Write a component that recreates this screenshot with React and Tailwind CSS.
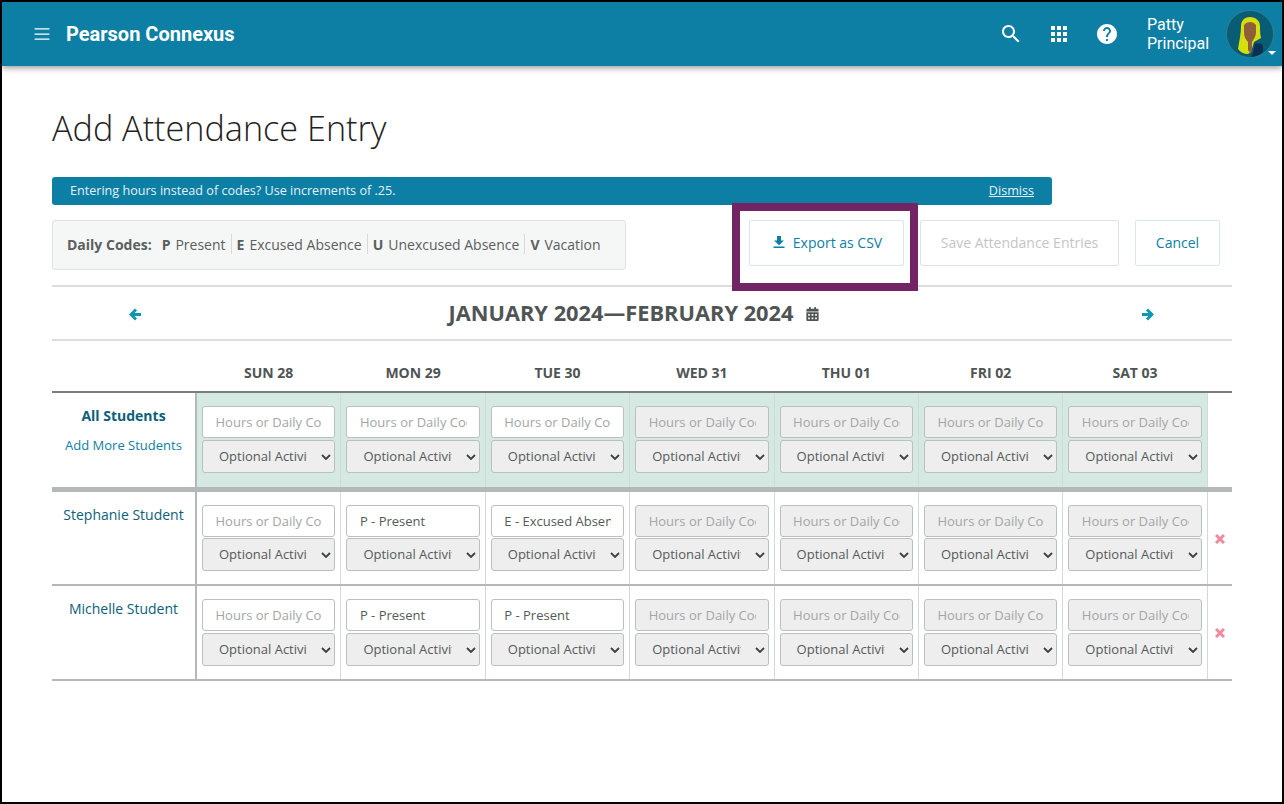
import React from "react";
import { FaCalendarAlt } from "react-icons/fa";

const days = ["SUN 28", "MON 29", "TUE 30", "WED 31", "THU 01", "FRI 02", "SAT 03"];

function Cell({ index, value, dark, wide }) {
  const disabled = index > 2;
  return (
    <div className={`pt-[13px] px-[5px] border-r border-[#d5d8d8] ${dark ? "bg-[#d5e9e3]" : ""}`}>
      <input
        readOnly
        disabled={disabled}
        value={value || ""}
        placeholder="Hours or Daily Code"
        className={`block w-full h-[32px] rounded-[3px] border border-[#bcbfbf] pl-[12.5px] text-[13px] text-[#555a5a] placeholder:text-[#a3a6a6] outline-none ${index === 0 ? "pr-[12.5px]" : "pr-[12px]"} ${disabled ? "bg-[#eeeeee]" : "bg-white"}`}
      />
      <div className={`relative ${wide ? "mt-[2px]" : "mt-px"}`}>
        <select className="block w-full h-[33px] appearance-none rounded-[3px] border border-[#bcbfbf] bg-[#eeeeee] pl-[16px] pr-[27px] text-[13px] text-[#555a5a] outline-none">
          <option>Optional Activities</option>
        </select>
        <svg viewBox="0 0 10 6" className="absolute right-[4px] top-[14px] h-[6px] w-[10px]" fill="none" stroke="#3c4040" strokeWidth="1.8">
          <path d="M1 1l4 4 4-4" />
        </svg>
      </div>
    </div>
  );
}

function Row({ name, values, height, border, wide }) {
  return (
    <div className={`grid grid-cols-[145px_repeat(7,144.4px)_1fr] ${height} ${border}`}>
      <div className="border-r-2 border-[#b5b8b8] pt-[13px] text-center text-[14px] leading-[20px] text-[#0d6079]">{name}</div>
      {days.map((d, i) => (
        <Cell key={d} index={i} value={values[i]} wide={wide} />
      ))}
      <div className="flex items-start justify-center pt-[41.5px]">
        <svg viewBox="0 0 10 10" className="h-[10px] w-[10px]" stroke="#f08aa0" strokeWidth="3">
          <path d="M1 1l8 8M9 1l-8 8" />
        </svg>
      </div>
    </div>
  );
}

export default function App() {
  return (
    <div className="h-[804px] w-[1284px] overflow-hidden border-2 border-black bg-white font-['Open_Sans',sans-serif] text-[#4f5454]">
      <header className="flex h-[64px] items-center bg-[#0d7fa5] pr-[8px] pl-[32px] text-white shadow-[0_2px_6px_rgba(0,0,0,0.4)] font-['Roboto',sans-serif]">
        <svg viewBox="0 0 16 14" className="h-[13px] w-[16px]" stroke="white" strokeWidth="1.4">
          <path d="M0 1h16M0 6.5h16M0 12h16" />
        </svg>
        <span className="ml-[16px] text-[20px] font-bold">Pearson Connexus</span>
        <div className="ml-auto flex items-center">
          <svg viewBox="0 0 24 24" className="h-[24px] w-[24px]" fill="white"><path d="M15.5 14h-.79l-.28-.27C15.41 12.59 16 11.11 16 9.5 16 5.91 13.09 3 9.5 3S3 5.91 3 9.5 5.91 16 9.5 16c1.61 0 3.09-.59 4.23-1.57l.27.28v.79l5 4.99L20.49 19l-4.99-5zm-6 0C7.01 14 5 11.99 5 9.5S7.01 5 9.5 5 14 7.01 14 9.5 11.99 14 9.5 14z" /></svg>
          <svg viewBox="0 0 24 24" className="ml-[24px] h-[24px] w-[24px]" fill="white"><path d="M4 8h4V4H4v4zm6 12h4v-4h-4v4zm-6 0h4v-4H4v4zm0-6h4v-4H4v4zm6 0h4v-4h-4v4zm6-10v4h4V4h-4zm-6 4h4V4h-4v4zm6 6h4v-4h-4v4zm0 6h4v-4h-4v4z" /></svg>
          <svg viewBox="0 0 24 24" className="ml-[24px] h-[24px] w-[24px]" fill="white"><path d="M12 2C6.48 2 2 6.48 2 12s4.48 10 10 10 10-4.48 10-10S17.52 2 12 2zm1 17h-2v-2h2v2zm2.07-7.75l-.9.92C13.45 12.9 13 13.5 13 15h-2v-.5c0-1.1.45-2.1 1.17-2.83l1.24-1.26c.37-.36.59-.86.59-1.41 0-1.1-.9-2-2-2s-2 .9-2 2H8c0-2.21 1.79-4 4-4s4 1.79 4 4c0 .88-.36 1.68-.93 2.25z" /></svg>
          <div className="ml-[28px] w-[70px] text-[16px] leading-[19px]">Patty<br />Principal</div>
          <div className="relative ml-[9px] h-[48px] w-[48px]">
            <svg viewBox="0 0 48 48" className="h-[48px] w-[48px]">
              <circle cx="24" cy="24" r="23.5" fill="#085d74" stroke="#4a8597" strokeWidth="0.6" />
              <path d="M29 33l7 1c1 2 1 6 1 8a23 23 0 0 1-12 5l2-4z" fill="#0a2f52" />
              <path d="M24 7c-6 0-9 4-9 9 0 8-2 16-3 23 2 3 6 5 10 5l3-2 3-10 7-4c-1-4-1-8-1-12 0-5-4-9-10-9z" fill="#d6de0c" />
              <path d="M18 15c3-4 9-4 12 0v7c0 5-3 8-4 10v8l-2 3-2-3v-8c-2-2-4-5-4-10z" fill="#8f5f3c" />
            </svg>
            <span className="absolute -right-[2px] bottom-[3px] h-0 w-0 border-x-[4px] border-t-[4px] border-x-transparent border-t-white" />
          </div>
        </div>
      </header>

      <main className="px-[50px]">
        <h1 className="mt-[38px] text-[34.2px] leading-[48px] font-light text-[#1f2222]">Add Attendance Entry</h1>

        <div className="mt-[25px] flex h-[28px] w-[1000px] items-center justify-between rounded-[3px] bg-[#0d7fa5] px-[18px] text-[12.6px] text-[#e4f1f5]">
          <span>Entering hours instead of codes? Use increments of .25.</span>
          <span className="underline">Dismiss</span>
        </div>

        <div className="mt-[15px] flex h-[50px] items-start">
          <div className="flex h-[50px] w-[574px] items-center rounded-[3px] border border-[#dfe2e2] bg-[#f5f6f6] pb-[2px] pl-[14px] text-[14px] text-[#5a5f5f]">
            <b className="font-bold">Daily Codes:</b>
            <b className="ml-[10px] font-bold">P</b><span className="ml-[5px]">Present</span>
            <i className="mx-[5px] h-[20px] w-px bg-[#d8dada]" />
            <b className="font-bold">E</b><span className="ml-[5px]">Excused Absence</span>
            <i className="mx-[5px] h-[20px] w-px bg-[#d8dada]" />
            <b className="font-bold">U</b><span className="ml-[5px]">Unexcused Absence</span>
            <i className="mx-[5px] h-[20px] w-px bg-[#d8dada]" />
            <b className="font-bold">V</b><span className="ml-[5px]">Vacation</span>
          </div>
          <div className="relative z-10 ml-[123px] h-[46px] w-[155px]">
            <button className="flex h-[46px] w-[155px] items-center justify-center rounded-[2px] border border-[#d8e8e8] bg-white pb-[2px] pl-[2px] text-[14px] text-[#0d7fa5]">
              <svg viewBox="0 0 12 12" className="mr-[8px] h-[12px] w-[12px]" fill="#0d7fa5"><path d="M4 0h4v4.5h3L6 9.2 1 4.5h3zM0.5 10.5h11V12H.5z" /></svg>
              Export as CSV
            </button>
            <span className="absolute -top-[17px] -left-[17px] h-[88px] w-[186px] border-[8px] border-[#722465]" />
          </div>
          <button className="ml-[16px] h-[46px] w-[199px] rounded-[2px] border border-[#e0e2e2] bg-white pb-[2px] text-[14px] text-[#c3c6c6]">Save Attendance Entries</button>
          <button className="ml-[16px] h-[46px] w-[85px] rounded-[2px] border border-[#d8e8e8] bg-white pb-[2px] text-[14px] text-[#0d7fa5]">Cancel</button>
        </div>

        <div className="mt-[15px] flex h-[56px] items-center border-y-2 border-[#dcdede]">
          <svg viewBox="0 0 12 13" className="ml-[77px] mt-[2px] h-[13px] w-[12px]" fill="none" stroke="#1097ae" strokeWidth="3">
            <path d="M7 1.5L2 6.5l5 5M2 6.5h10" />
          </svg>
          <div className="flex flex-1 items-center justify-center pt-px pr-[16px] text-[21.8px] font-bold text-[#4f5454]">
            JANUARY 2024—FEBRUARY 2024
            <FaCalendarAlt className="ml-[12px] h-[14px] w-[13px]" />
          </div>
          <svg viewBox="0 0 12 13" className="mr-[78px] mt-[2px] h-[13px] w-[12px]" fill="none" stroke="#1097ae" strokeWidth="3">
            <path d="M5 1.5l5 5-5 5M10 6.5H0" />
          </svg>
        </div>

        <div className="grid h-[50px] grid-cols-[145px_repeat(7,144.4px)_1fr] items-center pt-[12px]">
          <span />
          {days.map((d) => (
            <div key={d} className="pr-px text-center text-[14px] font-bold text-[#4f5454]">{d}</div>
          ))}
        </div>

        <div className="grid h-[96px] grid-cols-[145px_repeat(7,144.4px)_1fr] border-t-2 border-[#7a7e7e]">
          <div className="border-r-2 border-[#b5b8b8] pt-[13px] text-center">
            <div className="text-[14px] leading-[20px] font-bold text-[#0d6079]">All Students</div>
            <div className="mt-[9px] text-[13px] leading-[20px] text-[#0d7fa5]">Add More Students</div>
          </div>
          {days.map((d, i) => (
            <Cell key={d} index={i} dark wide />
          ))}
          <div />
        </div>
        <div className="h-[5px] bg-[#b5b8b8]" />
        <Row name="Stephanie Student" values={["", "P - Present", "E - Excused Absence"]} height="h-[92px]" border="" />
        <Row name="Michelle Student" values={["", "P - Present", "P - Present"]} height="h-[97px]" border="border-y-2 border-[#b5b8b8]" wide />
      </main>
    </div>
  );
}
